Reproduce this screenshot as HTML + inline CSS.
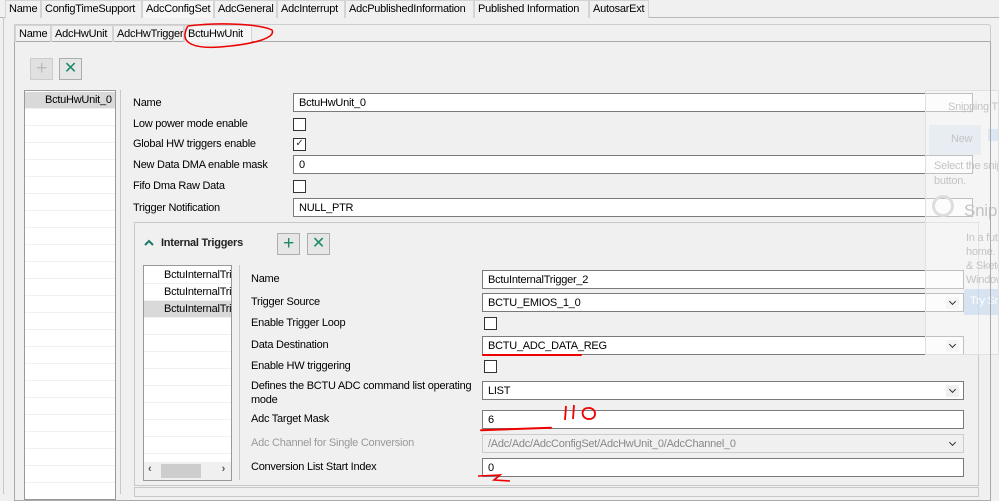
<!DOCTYPE html><html><head><style>
*{box-sizing:border-box}
body{margin:0;width:999px;height:494px;overflow:hidden;background:#f0f0f0;font-family:"Liberation Sans",sans-serif;font-size:11px;letter-spacing:-0.25px;color:#000;position:relative}
.a{position:absolute}
.tab{position:absolute;top:0;height:18px;border:1px solid #d4d4d4;border-bottom:none;padding:2px 0 0 3px;background:#f0f0f0;white-space:nowrap;overflow:hidden}
.st{position:absolute;top:25px;height:17px;border:1px solid #d4d4d4;border-bottom:none;padding:2px 0 0 3px;white-space:nowrap;overflow:hidden}
.lbl{position:absolute;white-space:nowrap}
.f{position:absolute;height:19px;background:#fff;border:1px solid #7a7a7a;padding:3px 0 0 5px;white-space:nowrap;overflow:hidden}
.cb{position:absolute;width:13px;height:13px;background:#fff;border:1px solid #333}
.dd::after{content:"";position:absolute;right:4px;top:3px;width:13px;height:12px;background:#f0f0f0}
.dd::before{content:"";position:absolute;right:8px;top:5px;width:4px;height:4px;border-right:1.5px solid #333;border-bottom:1.5px solid #333;transform:rotate(45deg);z-index:2}
.btn{position:absolute;width:23px;height:22px;border:1px solid #adadad;background:#e6e6e6;text-align:center;font-size:19px;line-height:20px;color:#1a8a6a}
.row{position:absolute;left:0;right:0;height:17px;border-bottom:1px solid #f0f0f0}
.red{position:absolute;background:#e00;height:2px;border-radius:1px}
</style></head><body>
<div class="a" style="left:0;top:17px;width:999px;height:1px;background:#b8b8b8"></div>
<div class="tab" style="left:5px;width:36px">Name</div>
<div class="tab" style="left:41px;width:101px">ConfigTimeSupport</div>
<div class="tab" style="left:142px;width:72px;background:#f6f6f6">AdcConfigSet</div>
<div class="tab" style="left:214px;width:63px">AdcGeneral</div>
<div class="tab" style="left:277px;width:68px">AdcInterrupt</div>
<div class="tab" style="left:345px;width:129px">AdcPublishedInformation</div>
<div class="tab" style="left:474px;width:115px">Published Information</div>
<div class="tab" style="left:589px;width:60px">AutosarExt</div>
<div class="a" style="left:3px;top:17px;width:1px;height:477px;background:#c8c8c8"></div>
<div class="a" style="left:14px;top:41px;width:977px;height:460px;border:1px solid #aaa"></div>
<div class="a" style="left:14px;top:24px;width:977px;height:18px;border:1px solid #ccc;border-bottom:none;border-radius:0 3px 0 0"></div>
<div class="st" style="left:15px;width:36px">Name</div>
<div class="st" style="left:51px;width:62px">AdcHwUnit</div>
<div class="st" style="left:113px;width:71px">AdcHwTrigger</div>
<div class="st" style="left:184px;width:68px;background:#f6f6f6">BctuHwUnit</div>
<svg class="a" style="left:180px;top:22px" width="96" height="30"><path d="M8 4 C40 0 80 2 92 8 C96 16 75 22 40 25 C12 27 4 20 5 12 C6 6 8 4 8 4" fill="none" stroke="#e00" stroke-width="1.5"/></svg>
<div class="btn" style="left:30px;top:58px;color:#bbb;background:#e0e0e0;border-color:#ccc">+</div>
<div class="btn" style="left:59px;top:58px;font-size:16px">✕</div>
<div class="a" style="left:24px;top:90px;width:92px;height:410px;background:#fff;border:1px solid #999;overflow:hidden">
<div class="row" style="top:1px;background:#d9d9d9;padding:2px 0 0 20px">BctuHwUnit_0</div>
<div class="row" style="top:18px"></div><div class="row" style="top:35px"></div><div class="row" style="top:52px"></div><div class="row" style="top:69px"></div><div class="row" style="top:86px"></div><div class="row" style="top:103px"></div><div class="row" style="top:120px"></div><div class="row" style="top:137px"></div><div class="row" style="top:154px"></div><div class="row" style="top:171px"></div><div class="row" style="top:188px"></div><div class="row" style="top:205px"></div><div class="row" style="top:222px"></div><div class="row" style="top:239px"></div><div class="row" style="top:256px"></div><div class="row" style="top:273px"></div><div class="row" style="top:290px"></div><div class="row" style="top:307px"></div><div class="row" style="top:324px"></div><div class="row" style="top:341px"></div><div class="row" style="top:358px"></div><div class="row" style="top:375px"></div><div class="row" style="top:392px"></div>
</div>
<div class="a" style="left:120px;top:90px;width:1px;height:404px;background:#c8c8c8"></div>
<div class="lbl" style="left:133px;top:97px">Name</div><div class="f" style="left:293px;top:93px;width:680px">BctuHwUnit_0</div>
<div class="lbl" style="left:133px;top:118px">Low power mode enable</div><div class="cb" style="left:293px;top:118px"></div>
<div class="lbl" style="left:133px;top:138px">Global HW triggers enable</div><div class="cb" style="left:293px;top:138px;font-size:10px;line-height:10px;text-align:center;color:#333">✓</div>
<div class="lbl" style="left:133px;top:159px">New Data DMA enable mask</div><div class="f" style="left:293px;top:155px;width:680px">0</div>
<div class="lbl" style="left:133px;top:180px">Fifo Dma Raw Data</div><div class="cb" style="left:293px;top:180px"></div>
<div class="lbl" style="left:133px;top:202px">Trigger Notification</div><div class="f" style="left:293px;top:198px;width:680px">NULL_PTR</div>
<div class="a" style="left:134px;top:222px;width:845px;height:264px;border:1px solid #c8c8c8"></div>
<div class="a" style="left:134px;top:487px;width:845px;height:10px;border:1px solid #c8c8c8"></div>
<svg class="a" style="left:144px;top:239px" width="10" height="8"><path d="M1 6 L5 2 L9 6" fill="none" stroke="#1a7a6a" stroke-width="2"/></svg>
<div class="lbl" style="left:161px;top:237px;font-weight:bold;color:#222">Internal Triggers</div>
<div class="btn" style="left:277px;top:233px">+</div>
<div class="btn" style="left:307px;top:233px;font-size:16px">✕</div>
<div class="a" style="left:143px;top:265px;width:89px;height:216px;background:#fff;border:1px solid #999;overflow:hidden">
<div class="row" style="top:1px;padding:2px 0 0 20px;white-space:nowrap">BctuInternalTri</div>
<div class="row" style="top:18px;padding:2px 0 0 20px;white-space:nowrap">BctuInternalTri</div>
<div class="row" style="top:35px;padding:2px 0 0 20px;white-space:nowrap;background:#d9d9d9">BctuInternalTri</div>
<div class="row" style="top:52px"></div><div class="row" style="top:69px"></div><div class="row" style="top:86px"></div><div class="row" style="top:103px"></div><div class="row" style="top:120px"></div><div class="row" style="top:137px"></div><div class="row" style="top:154px"></div><div class="row" style="top:171px"></div>
<div class="a" style="left:0;right:0;top:196px;height:18px;background:#f0f0f0"><div class="a" style="left:17px;top:2px;width:40px;height:14px;background:#cdcdcd"></div><span class="a" style="left:4px;top:1px;font-weight:bold;color:#555">‹</span><span class="a" style="right:6px;top:1px;font-weight:bold;color:#555">›</span></div>
</div>
<div class="a" style="left:239px;top:265px;width:1px;height:215px;background:#c8c8c8"></div>
<div class="lbl" style="left:251px;top:273px">Name</div><div class="f" style="left:482px;top:270px;width:482px">BctuInternalTrigger_2</div>
<div class="lbl" style="left:251px;top:296px">Trigger Source</div><div class="f dd" style="left:482px;top:293px;width:482px">BCTU_EMIOS_1_0</div>
<div class="lbl" style="left:251px;top:317px">Enable Trigger Loop</div><div class="cb" style="left:484px;top:317px"></div>
<div class="lbl" style="left:251px;top:339px">Data Destination</div><div class="f dd" style="left:482px;top:336px;width:482px">BCTU_ADC_DATA_REG</div>
<div class="lbl" style="left:251px;top:360px">Enable HW triggering</div><div class="cb" style="left:484px;top:360px"></div>
<div class="lbl" style="left:251px;top:379px;line-height:14px">Defines the BCTU ADC command list operating<br>mode</div><div class="f dd" style="left:482px;top:381px;width:482px">LIST</div>
<div class="lbl" style="left:251px;top:413px">Adc Target Mask</div><div class="f" style="left:482px;top:410px;width:482px">6</div>
<div class="lbl" style="left:251px;top:437px;color:#999">Adc Channel for Single Conversion</div><div class="f dd" style="left:482px;top:434px;width:482px;background:#f0f0f0;border-color:#ccc;color:#888">/Adc/Adc/AdcConfigSet/AdcHwUnit_0/AdcChannel_0</div>
<div class="lbl" style="left:251px;top:461px">Conversion List Start Index</div><div class="f" style="left:482px;top:458px;width:482px">0</div>
<div class="red" style="left:482px;top:354px;width:100px"></div>
<div class="red" style="left:480px;top:428px;width:72px;transform:rotate(-2deg)"></div>
<svg class="a" style="left:560px;top:402px" width="50" height="22"><path d="M6 4 L5 18 M14 3 L13 17 M28 6 C20 6 21 18 30 17 C38 16 36 5 28 6" fill="none" stroke="#e00" stroke-width="1.8"/></svg>
<svg class="a" style="left:476px;top:472px" width="40" height="14"><path d="M2 4 L24 3 L18 8 L34 9" fill="none" stroke="#e00" stroke-width="1.6"/></svg>
<div class="a" style="left:925px;top:90px;width:74px;height:265px;background:rgba(250,250,250,0.55);border:1px solid #e0e0e0;color:#c4c4c4;font-size:11px;overflow:hidden;white-space:nowrap">
<div class="a" style="left:22px;top:10px">Snipping T</div>
<div class="a" style="left:3px;top:34px;width:52px;height:30px;background:rgba(210,225,240,.4);padding:8px 0 0 22px">New</div>
<div class="a" style="left:62px;top:38px;width:20px;height:12px;background:rgba(180,210,240,.4)"></div>
<div class="a" style="left:8px;top:68px;line-height:15px">Select the snip<br>button.</div>
<div class="a" style="left:38px;top:110px;font-size:17px">Snipp</div>
<div class="a" style="left:6px;top:104px;width:22px;height:22px;border-radius:50%;border:3px solid #ddd"></div>
<div class="a" style="left:40px;top:140px;line-height:14px">In a futu<br>home. T<br>&amp; Sketc<br>Window</div>
<div class="a" style="left:38px;top:198px;width:40px;height:26px;background:rgba(170,200,235,.4);color:#fff;padding:6px 0 0 6px">Try Sni</div>
</div>
<div class="a" style="left:990px;top:41px;width:1px;height:453px;background:#aaa"></div>
</body></html>
